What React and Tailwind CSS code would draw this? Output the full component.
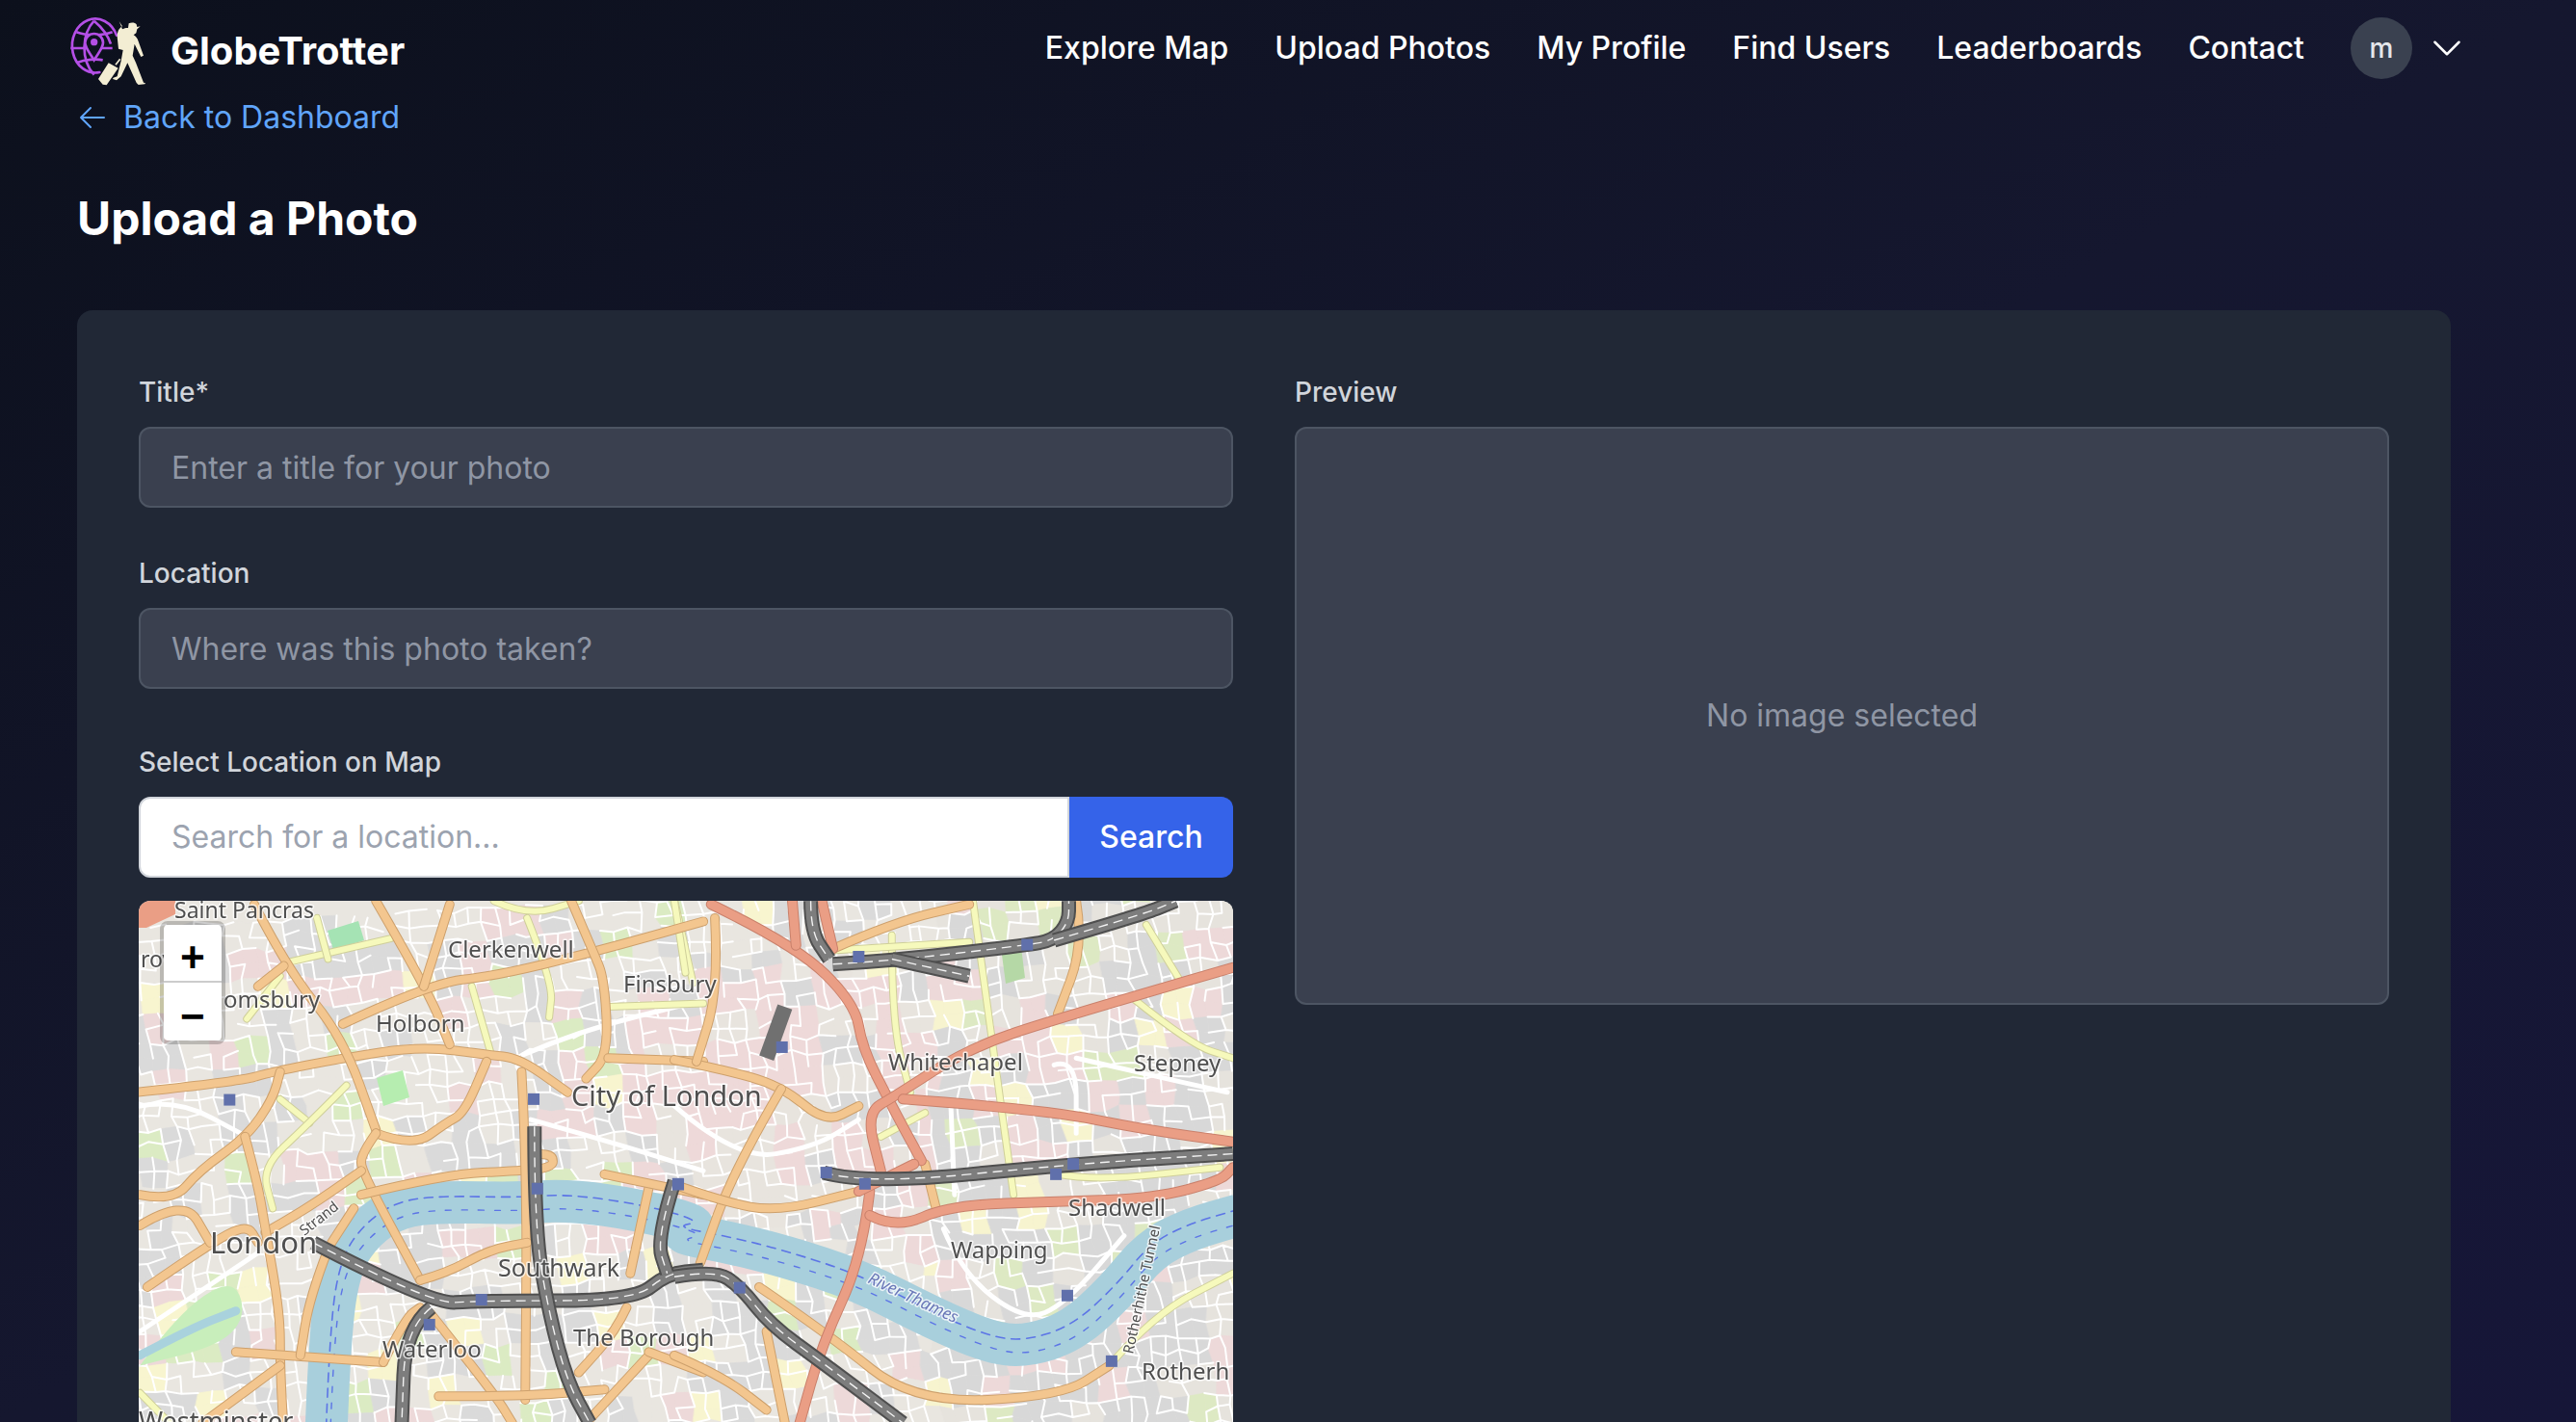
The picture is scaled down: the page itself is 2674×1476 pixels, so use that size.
import React from 'react'

// map traces, measured off the two zoomed crops
const a = (pts) => pts.map(([x, y]) => [130 + x / 2.613, 920 + y / 2.82])
const b = (pts) => pts.map(([x, y]) => [700 + x / 2.613, 920 + y / 2.82])

const smooth = (pts) => {
  if (pts.length < 3) return 'M' + pts.map((p) => p.join(' ')).join('L')
  let d = `M${pts[0][0]} ${pts[0][1]}`
  for (let i = 1; i < pts.length - 1; i++) {
    const mx = (pts[i][0] + pts[i + 1][0]) / 2
    const my = (pts[i][1] + pts[i + 1][1]) / 2
    d += `Q${pts[i][0]} ${pts[i][1]} ${mx} ${my}`
  }
  const last = pts[pts.length - 1]
  return d + `L${last[0]} ${last[1]}`
}

const river = [
  ...a([[545, 1600], [555, 1300], [585, 1100], [650, 1000], [740, 935], [860, 920], [1060, 925], [1200, 915], [1400, 945], [1568, 995]]),
  ...b([[0, 1010], [150, 1040], [300, 1080], [500, 1150], [700, 1260], [850, 1330], [950, 1345], [1080, 1300], [1200, 1180], [1290, 1060], [1400, 1000], [1530, 960]]),
]

const whiteRoads = [
  a([[40, 1300], [360, 1070]]),
  a([[1080, 490], [1230, 420], [1568, 330]]),
  a([[1100, 680], [1300, 740], [1568, 830]]),
  a([[40, 640], [140, 620], [330, 730]]),
  b([[0, 640], [170, 800], [380, 760], [500, 680]]),
  b([[730, 1000], [780, 1130], [950, 1270], [1060, 1220], [1220, 1020]]),
  b([[1030, 520], [1090, 500], [1090, 720]]),
  b([[1090, 500], [1250, 540], [1500, 600]]),
  b([[750, 640], [760, 900]]),
]

const orange = [
  a([[30, 600], [300, 570], [400, 540], [590, 500], [800, 465], [980, 490], [1070, 500], [1200, 600]]),
  a([[40, 900], [130, 920], [200, 830], [330, 730], [400, 620], [420, 540]]),
  a([[350, 50], [440, 240], [590, 440], [680, 710]]),
  a([[680, 40], [820, 300], [880, 460]]),
  a([[590, 400], [830, 280], [1000, 260], [1270, 190], [1568, 100]]),
  a([[360, 290], [430, 230]]),
  a([[880, 50], [810, 290]]),
  a([[1210, 40], [1270, 190], [1300, 270], [1310, 490], [1250, 560]]),
  a([[1310, 500], [1568, 510]]),
  a([[680, 720], [780, 760], [870, 690], [920, 660], [980, 510]]),
  a([[680, 720], [640, 780], [640, 830], [800, 1150]]),
  a([[380, 1010], [480, 950], [640, 830]]),
  a([[640, 900], [870, 840], [1070, 830], [1160, 820], [1160, 785], [1120, 780]]),
  a([[1075, 540], [1090, 830], [1085, 1500]]),
  a([[60, 1170], [220, 1050], [330, 985], [360, 1040]]),
  a([[40, 990], [160, 910], [230, 1040]]),
  a([[325, 730], [360, 870], [380, 1000], [420, 1250], [420, 1400], [430, 1600]]),
  a([[300, 1360], [700, 1390]]),
  a([[210, 1568], [420, 1400]]),
  a([[800, 1150], [870, 1130], [990, 1060], [1090, 1040]]),
  a([[550, 1060], [500, 1200], [475, 1370]]),
  a([[620, 940], [560, 1040]]),
  a([[830, 1250], [1000, 1480], [1050, 1568]]),
  a([[700, 1390], [760, 1260], [800, 1230]]),
  a([[850, 1490], [1090, 1490], [1300, 1470]]),
  a([[1420, 880], [1370, 1130]]),
  a([[1300, 840], [1568, 900]]),
  a([[1420, 1370], [1250, 1568]]),
  a([[1420, 1360], [1568, 1420]]),
  a([[1360, 1230], [1330, 1300], [1230, 1420]]),
  b([[0, 505], [120, 530], [290, 580], [410, 690], [500, 640]]),
  b([[110, 90], [120, 300], [60, 510]]),
  b([[290, 590], [160, 830], [70, 1100]]),
  b([[430, 180], [600, 100], [800, 50]]),
  b([[1090, 40], [1110, 170], [1040, 370]]),
  b([[0, 870], [130, 920], [280, 950], [500, 890]]),
  b([[680, 810], [710, 940]]),
  b([[230, 1170], [420, 1310], [650, 1510], [1050, 1490], [1180, 1400]]),
  b([[0, 1370], [130, 1430], [250, 1530]]),
  b([[250, 1300], [300, 1568]]),
]

const yellow = [
  a([[440, 220], [720, 150]]),
  a([[520, 90], [550, 210]]),
  a([[330, 385], [420, 260]]),
  a([[940, 290], [990, 480]]),
  a([[1090, 90], [1160, 280], [1150, 380]]),
  a([[1490, 40], [1540, 280]]),
  a([[420, 620], [500, 690]]),
  a([[600, 580], [490, 700], [370, 820], [400, 940]]),
  a([[1000, 40], [1090, 85], [1230, 40]]),
  a([[1310, 350], [1568, 340]]),
  a([[40, 1480], [120, 1568]]),
  b([[0, 40], [30, 250]]),
  b([[590, 140], [590, 400], [640, 600]]),
  b([[810, 40], [860, 440], [920, 900]]),
  b([[430, 185], [800, 160]]),
  b([[1280, 110], [1370, 270]]),
  b([[1250, 330], [1400, 460], [1515, 500]]),
  b([[1040, 840], [1140, 860], [1480, 820]]),
  b([[560, 730], [680, 660]]),
  b([[1180, 1400], [1300, 1250], [1515, 1130]]),
]

const salmon = [
  b([[100, 50], [330, 170], [490, 340], [510, 470], [580, 620], [670, 800]]),
  b([[1515, 235], [1050, 380], [800, 470], [600, 610], [520, 660], [560, 830]]),
  b([[620, 620], [1000, 650], [1280, 710], [1515, 745]]),
  b([[530, 890], [510, 1080], [400, 1340], [340, 1568]]),
  b([[530, 960], [600, 1000], [750, 930], [1050, 920], [1300, 910], [1480, 860], [1515, 820]]),
  b([[500, 890], [650, 810]]),
  b([[320, 40], [330, 170]]),
  b([[400, 40], [430, 180]]),
]

const rail = [
  a([[510, 1040], [830, 1220], [960, 1210], [1380, 1210], [1470, 1130], [1568, 1120]]),
  a([[1490, 860], [1440, 1030], [1470, 1130]]),
  a([[1110, 700], [1110, 1000], [1150, 1250], [1200, 1450], [1260, 1568]]),
  a([[830, 1230], [760, 1290], [750, 1568]]),
  b([[370, 40], [370, 130], [420, 210]]),
  b([[430, 225], [590, 215], [950, 170], [1030, 155], [1070, 100], [1070, 40]]),
  b([[1030, 155], [1270, 80], [1360, 40]]),
  b([[590, 210], [800, 260]]),
  b([[405, 835], [520, 870], [1080, 810], [1515, 780]]),
  b([[0, 1140], [110, 1120], [180, 1170], [260, 1280], [400, 1390], [620, 1568]]),
]

const stations = [
  ...a([[283, 622], [1108, 620], [1118, 882], [1500, 870], [966, 1207], [825, 1280]]),
  ...b([[500, 203], [957, 168], [292, 468], [412, 835], [517, 868], [1035, 840], [1082, 810], [10, 868], [177, 1172], [1066, 1195], [1186, 1387]]),
]

const labels = [
  ['Saint Pancras', 181, 952, 23],
  ['rov', 146, 1003, 23],
  ['Clerkenwell', 465, 993, 24],
  ['Finsbury', 647, 1029, 24],
  ['omsbury', 232, 1045, 24],
  ['Holborn', 390, 1070, 24],
  ['City of London', 593, 1147, 29],
  ['Whitechapel', 922, 1110, 24],
  ['Stepney', 1177, 1111, 24],
  ['Shadwell', 1109, 1261, 24],
  ['Wapping', 987, 1305, 24],
  ['London', 218, 1300, 31],
  ['Southwark', 517, 1324, 25],
  ['The Borough', 595, 1396, 24],
  ['Waterloo', 397, 1408, 24],
  ['Rotherh', 1185, 1431, 24],
  ['Westminster', 144, 1484, 27],
]

// deterministic street mesh: block fills first, then only some of the edges as streets
const makeBlocks = () => {
  let seed = 7
  const rnd = () => {
    seed = (seed * 16807) % 2147483647
    return seed / 2147483647
  }
  const size = 15
  const cols = 86
  const rows = 48
  const pts = []
  for (let r = 0; r <= rows; r++) {
    pts.push([])
    for (let c = 0; c <= cols; c++) {
      pts[r].push([80 + c * size + r * 2 + (rnd() - 0.5) * 7, 925 + r * size - c * 0.8 + 40 + (rnd() - 0.5) * 7])
    }
  }
  const coarse = {}
  const cells = []
  let streets = ''
  for (let r = 0; r < rows; r++) {
    for (let c = 0; c < cols; c++) {
      const q = [pts[r][c], pts[r][c + 1], pts[r + 1][c + 1], pts[r + 1][c]]
      const key = `${r >> 1}-${c >> 1}`
      if (coarse[key] === undefined) coarse[key] = rnd()
      const t = coarse[key]
      const x = q[0][0]
      const y = q[0][1]
      const city = x > 640 && x < 960 && y > 1000 && y < 1270
      const east = x > 960
      let fill
      if (city) fill = t < 0.5 ? '#eed9d9' : t < 0.82 ? '#e8e4de' : '#d9d9d9'
      else if (east) fill = t < 0.5 ? '#d8d8d8' : t < 0.62 ? '#edd9d9' : t < 0.72 ? '#dde9c3' : t < 0.78 ? '#f7f4cf' : '#e6e3dd'
      else fill = t < 0.3 ? '#dadada' : t < 0.42 ? '#edd9d9' : t < 0.5 ? '#dbebc3' : t < 0.56 ? '#f8f5cf' : '#e9e6e0'
      cells.push({ d: 'M' + q.map((p) => p.join(' ')).join('L') + 'Z', fill })
      if (rnd() < 0.6) streets += `M${q[0].join(' ')}L${q[1].join(' ')}`
      if (rnd() < 0.6) streets += `M${q[0].join(' ')}L${q[3].join(' ')}`
    }
  }
  return { cells, streets }
}
const { cells, streets } = makeBlocks()

const Road = ({ pts, width, color, casing }) => (
  <>
    <path d={smooth(pts)} stroke={casing} strokeWidth={width + 2} />
    <path d={smooth(pts)} stroke={color} strokeWidth={width} />
  </>
)

const MapTiles = () => (
  <svg viewBox="144 934 1136 542" className="block w-[1136px] h-[542px]" fill="none" strokeLinecap="round" strokeLinejoin="round">
    <defs>
      <filter id="tile" x="0" y="0" width="1" height="1">
        <feGaussianBlur stdDeviation="0.6" />
      </filter>
    </defs>
    <g filter="url(#tile)">
      <rect x="144" y="934" width="1136" height="542" fill="#e9e6e0" />
      {cells.map((q, i) => (
        <path key={i} d={q.d} fill={q.fill} stroke={q.fill} strokeWidth="0.6" />
      ))}
      <path d={streets} stroke="#ffffff" strokeWidth="2" />

      <path d={smooth(a([[40, 1400], [140, 1250], [290, 1140], [330, 1250], [260, 1340], [40, 1400]]))} fill="#c8eebb" />
      <path d={smooth(a([[40, 1370], [180, 1290], [300, 1240]]))} stroke="#a9d2dd" strokeWidth="9" />
      <path d="M391 1118L418 1110L425 1138L398 1147Z" fill="#b6edb0" />
      <path d="M340 965L372 955L378 975L346 985Z" fill="#a5e3b4" />
      <path d="M1040 990L1060 982L1064 1014L1044 1020Z" fill="#b5d8a6" />
      <path d="M144 934h38v14l-30 14h-8z" fill="#ea9e85" />

      {whiteRoads.map((pts, i) => (
        <path key={i} d={smooth(pts)} stroke="#ffffff" strokeWidth="5" />
      ))}

      <path d={smooth(river)} stroke="#a8cfdc" strokeWidth="44" strokeLinecap="butt" />
      <path d={smooth(river)} stroke="#5c74e6" strokeWidth="1.6" strokeDasharray="9 7" transform="translate(0 -6)" />
      <path d={smooth(river)} stroke="#5c74e6" strokeWidth="1.4" strokeDasharray="6 11" transform="translate(4 8)" />

      {yellow.map((pts, i) => (
        <Road key={i} pts={pts} width={6} color="#f6f9bc" casing="#cfcf9a" />
      ))}
      {orange.map((pts, i) => (
        <Road key={i} pts={pts} width={8} color="#f3c68f" casing="#cda06c" />
      ))}
      {salmon.map((pts, i) => (
        <Road key={i} pts={pts} width={9} color="#ea9e85" casing="#c9806b" />
      ))}
      <path d={smooth(b([[250, 500], [300, 350]]))} stroke="#707070" strokeWidth="16" strokeLinecap="butt" />
      {rail.map((pts, i) => (
        <g key={i} strokeLinecap="butt">
          <path d={smooth(pts)} stroke="#4f4f4f" strokeWidth="15" />
          <path d={smooth(pts)} stroke="#7d7d7d" strokeWidth="11" />
          <path d={smooth(pts)} stroke="#f2f2f2" strokeWidth="1.4" strokeDasharray="10 6" />
        </g>
      ))}
      {stations.map(([x, y], i) => (
        <rect key={i} x={x - 6} y={y - 6} width="12" height="12" fill="#6070ab" />
      ))}

      <g className="font-['Noto_Sans',sans-serif]" fill="#4f4f4f" stroke="#ffffff" strokeOpacity="0.75" strokeWidth="3" style={{ paintOrder: 'stroke' }}>
        {labels.map(([text, x, y, size]) => (
          <text key={text} x={x} y={y} fontSize={size}>
            {text}
          </text>
        ))}
        <text transform="translate(316 1282) rotate(-38)" fontSize="15">Strand</text>
        <text transform="translate(900 1330) rotate(25)" fontSize="17" fontStyle="italic" fill="#6a78b8">River Thames</text>
        <text transform="translate(1176 1405) rotate(-78)" fontSize="15">Rotherhithe Tunnel</text>
      </g>
    </g>
  </svg>
)

const Logo = () => (
  <svg viewBox="0 0 330 270" className="w-[110px] h-[90px] shrink-0" fill="none">
    <g stroke="#b44fe6" strokeWidth="8">
      <path d="M183 95A72 84 0 1 0 130 210" strokeLinecap="round" />
      <path d="M40 135h130M58 85c30 12 80 12 112 0M60 180c25-10 60-12 80-8" />
      <path d="M113 50C75 90 70 170 113 218M113 50c30 25 45 50 52 72" />
      <path d="M113 172C100 150 85 135 85 118a28 28 0 0 1 56 0c0 17-15 32-28 54Z" fill="#0e1220" />
    </g>
    <circle cx="113" cy="116" r="11" fill="#b44fe6" />
    <g fill="#f3edd3">
      <path d="M201 76c8-4 14-5 18-4l2-14c8-4 20-3 24 3l2 8 10-2-10 9-3 12-8 6c6 3 12 10 15 20l16 44-8 4-20-40-6 36 10 22 24 62 6 2-2 3-20 2-6-6-28-62-20 42-14 12-12-4 2-4 12-4 12-48 6-34-14-4-4-38c0-18 8-28 16-32l-10-16Z" />
      <path d="M126 231l32-50 30 16-36 53-12-2-14-17ZM178 185l14-18 4 3-14 18Z" />
    </g>
  </svg>
)

const navLinks = ['Explore Map', 'Upload Photos', 'My Profile', 'Find Users', 'Leaderboards', 'Contact']

const Field = ({ label, placeholder }) => (
  <div className="flex flex-col">
    <label className="h-[34px] mb-[19px] text-[28px] leading-[34px] font-medium text-[#d1d5db]">{label}</label>
    <input
      placeholder={placeholder}
      className="h-[84px] w-full px-[32px] text-[32px] bg-[#3a404f] border-2 border-[#4d5563] rounded-[12px] text-white placeholder:text-[#8f96a4] outline-none"
    />
  </div>
)

const App = () => {
  return (
    <div className="h-screen w-full overflow-hidden bg-gradient-to-br from-[#0c101c] via-[#15172f] to-[#161638] font-[Inter,sans-serif] text-white">
      <nav className="h-[100px] flex items-center pl-[60px] pr-[114px]">
        <Logo />
        <span className="ml-[7px] mt-[5px] text-[40px] font-bold leading-none">GlobeTrotter</span>
        <div className="ml-auto flex items-center gap-[48px] text-[32px] font-medium">
          {navLinks.map((l) => (
            <a key={l}>{l}</a>
          ))}
          <div className="flex items-center gap-[16px]">
            <div className="w-[64px] h-[64px] rounded-full bg-[#3a4150] flex items-center justify-center text-[28px] font-medium text-[#e5e7eb]">m</div>
            <svg viewBox="0 0 24 24" className="w-[40px] h-[40px]" fill="none" stroke="currentColor" strokeWidth="1.5" strokeLinecap="round" strokeLinejoin="round">
              <path d="m19.5 8.25-7.5 7.5-7.5-7.5" />
            </svg>
          </div>
        </div>
      </nav>

      <main className="pl-[80px] pr-[130px]">
        <a className="flex items-center gap-[16px] h-[44px] text-[32px] text-[#60a5fa]">
          <svg viewBox="0 0 24 24" className="w-[32px] h-[32px]" fill="none" stroke="currentColor" strokeWidth="1.5" strokeLinecap="round" strokeLinejoin="round">
            <path d="M10.5 19.5 3 12m0 0 7.5-7.5M3 12h18" />
          </svg>
          Back to Dashboard
        </a>
        <h1 className="mt-[53px] h-[60px] text-[48px] leading-[60px] font-bold">Upload a Photo</h1>

        <div className="mt-[65px] px-[64px] pt-[68px] h-[1400px] rounded-[16px] bg-[#212836] grid grid-cols-2 gap-[64px] items-start">
          <div className="flex flex-col">
            <Field label="Title*" placeholder="Enter a title for your photo" />
            <div className="mt-[51px]">
              <Field label="Location" placeholder="Where was this photo taken?" />
            </div>

            <label className="mt-[59px] h-[34px] mb-[19px] text-[28px] leading-[34px] font-medium text-[#d1d5db]">Select Location on Map</label>
            <div className="flex h-[84px]">
              <input
                placeholder="Search for a location..."
                className="flex-1 min-w-0 px-[32px] text-[32px] bg-white border-2 border-[#d1d5db] rounded-l-[12px] text-gray-900 placeholder:text-[#9ca3af] outline-none"
              />
              <button className="w-[170px] rounded-r-[12px] bg-[#3563e9] text-[32px] font-medium text-white">Search</button>
            </div>

            <div className="relative mt-[24px] h-[800px] rounded-[12px] overflow-hidden bg-[#e9e6e0]">
              <MapTiles />
              <div className="absolute left-[22px] top-[21px] flex flex-col rounded-[8px] border-[4px] border-black/20 bg-clip-padding">
                <button className="w-[60px] h-[60px] pt-[16px] bg-white rounded-t-[5px] border-b-2 border-[#cccccc] text-black font-['Liberation_Mono',monospace] font-bold text-[44px] leading-[42px]">+</button>
                <button className="w-[60px] h-[60px] pt-[16px] bg-white rounded-b-[5px] text-black font-['Liberation_Mono',monospace] font-bold text-[44px] leading-[44px]">−</button>
              </div>
            </div>
          </div>

          <div className="flex flex-col">
            <label className="h-[34px] mb-[19px] text-[28px] leading-[34px] font-medium text-[#d1d5db]">Preview</label>
            <div className="h-[600px] flex items-center justify-center bg-[#3a404f] border-2 border-[#4d5563] rounded-[12px] text-[32px] text-[#8f96a4]">
              No image selected
            </div>
          </div>
        </div>
      </main>
    </div>
  )
}

export default App
